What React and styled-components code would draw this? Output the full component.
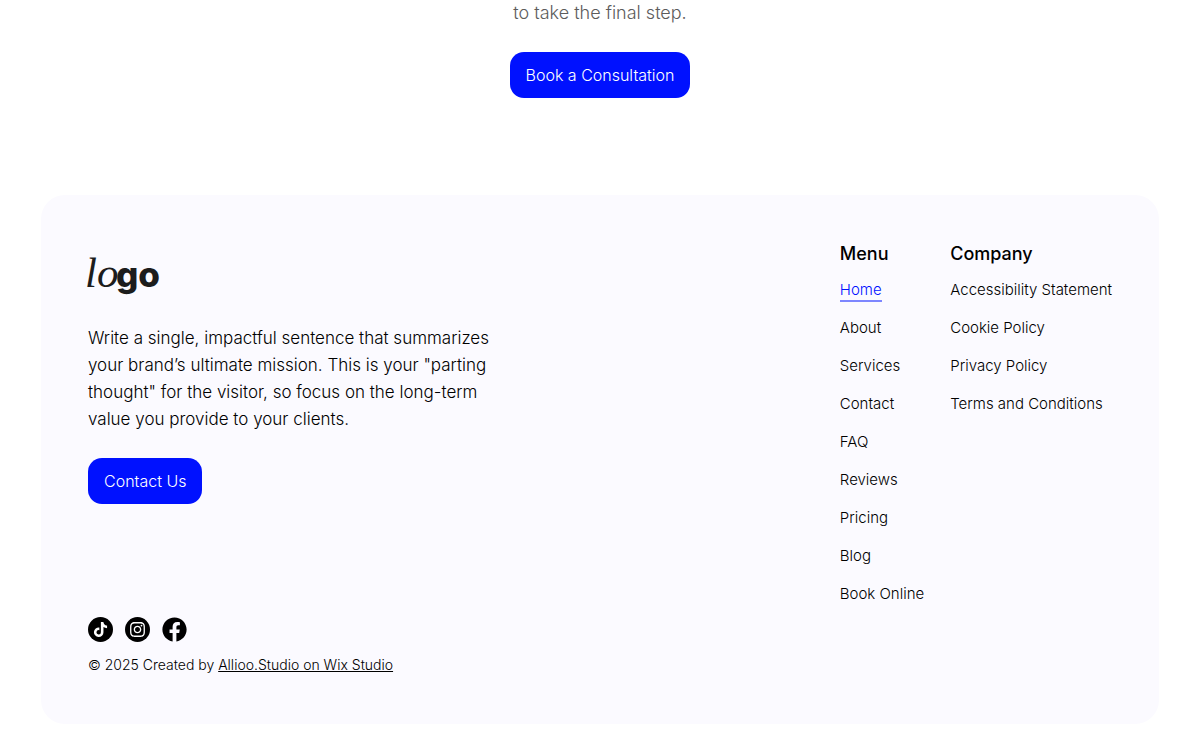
import React from "react";
import styled, { createGlobalStyle } from "styled-components";
import { FaTiktok, FaInstagram, FaFacebook } from "react-icons/fa";

const GlobalStyle = createGlobalStyle`
  * {
    box-sizing: border-box;
  }
  body {
    margin: 0;
    background: #ffffff;
    color: #000000;
    font-family: "Inter", "Liberation Sans", sans-serif;
    font-weight: 300;
  }
  a {
    color: inherit;
  }
`;

const Cta = styled.section`
  display: flex;
  flex-direction: column;
  align-items: center;
  gap: 26px;
  padding-bottom: 97px;
`;
const CtaText = styled.p`
  margin: 0;
  font-size: 18px;
  line-height: 26px;
  color: #5c5c5c;
`;
const Button = styled.button`
  height: 46px;
  padding: 0 16px;
  border: 0;
  border-radius: 14px;
  background: #0011ff;
  color: #ffffff;
  font-family: inherit;
  font-size: 16px;
  font-weight: inherit;
  cursor: pointer;
`;
const FooterBox = styled.footer`
  display: flex;
  justify-content: space-between;
  margin: 0 41px 24px;
  padding: 46px 47px 49px;
  border-radius: 24px;
  background: #fbfaff;
`;
const Brand = styled.div`
  display: flex;
  flex-direction: column;
  align-items: flex-start;
  max-width: 420px;
`;
const Logo = styled.a`
  display: block;
  padding-top: 8px;
  color: #1c1c1c;
`;
const LogoArt = styled.svg`
  display: block;
  overflow: visible;
`;
const LogoSerif = styled.text`
  font-family: "Liberation Serif", serif;
  font-size: 43px;
  font-style: italic;
`;
const LogoSans = styled.text`
  font-family: "Inter", sans-serif;
  font-size: 35px;
  font-weight: 800;
`;
const Mission = styled.p`
  margin: 28px 0 25px;
  font-size: 17px;
  line-height: 27px;
`;
const Bottom = styled.div`
  margin-top: 113px;
`;
const Socials = styled.div`
  display: flex;
  gap: 12px;
  margin-bottom: 13px;
`;
const SocialLink = styled.a`
  display: flex;
  align-items: center;
  justify-content: center;
  width: 25px;
  height: 25px;
  border-radius: 50%;
  background: ${(props) => (props.$plain ? "transparent" : "#000000")};
  color: ${(props) => (props.$plain ? "#000000" : "#ffffff")};
`;
const Copyright = styled.p`
  margin: 0;
  font-size: 14px;
  line-height: 20px;
`;
const Navs = styled.div`
  display: flex;
  gap: 26px;
`;
const NavTitle = styled.h2`
  margin: 0 0 13px;
  font-size: 18px;
  font-weight: 500;
  line-height: 26px;
`;
const NavList = styled.ul`
  display: flex;
  flex-direction: column;
  align-items: flex-start;
  gap: 16px;
  margin: 0;
  padding: 0;
  list-style: none;
`;
const NavLink = styled.a`
  display: block;
  font-size: 15px;
  line-height: 20px;
  text-decoration: none;
  color: ${(props) => (props.$active ? "#0011ff" : "#000000")};
  border-bottom: 2px solid
    ${(props) => (props.$active ? "#7d86ff" : "transparent")};
`;

const menuLinks = [
  "Home",
  "About",
  "Services",
  "Contact",
  "FAQ",
  "Reviews",
  "Pricing",
  "Blog",
  "Book Online",
];
const companyLinks = [
  "Accessibility Statement",
  "Cookie Policy",
  "Privacy Policy",
  "Terms and Conditions",
];

function FooterNav({ title, links, active }) {
  return (
    <nav aria-label={title}>
      <NavTitle>{title}</NavTitle>
      <NavList>
        {links.map((link) => (
          <li key={link}>
            <NavLink href="#" $active={link === active}>
              {link}
            </NavLink>
          </li>
        ))}
      </NavList>
    </nav>
  );
}

function App() {
  return (
    <>
      <GlobalStyle />
      <Cta>
        <CtaText>to take the final step.</CtaText>
        <Button>Book a Consultation</Button>
      </Cta>
      <FooterBox>
        <Brand>
          <Logo href="#">
            <LogoArt width="71" height="48" fill="currentColor">
              <LogoSerif x="-3" y="38">
                lo
              </LogoSerif>
              <LogoSans x="28" y="38">
                go
              </LogoSans>
            </LogoArt>
          </Logo>
          <Mission>
            Write a single, impactful sentence that summarizes your brand’s
            ultimate mission. This is your "parting thought" for the visitor,
            so focus on the long-term value you provide to your clients.
          </Mission>
          <Button>Contact Us</Button>
          <Bottom>
            <Socials>
              <SocialLink href="#" aria-label="TikTok">
                <FaTiktok size={15} />
              </SocialLink>
              <SocialLink href="#" aria-label="Instagram">
                <FaInstagram size={17} />
              </SocialLink>
              <SocialLink href="#" aria-label="Facebook" $plain>
                <FaFacebook size={25} />
              </SocialLink>
            </Socials>
            <Copyright>
              © 2025 Created by <a href="#">Allioo.Studio on Wix Studio</a>
            </Copyright>
          </Bottom>
        </Brand>
        <Navs>
          <FooterNav title="Menu" links={menuLinks} active="Home" />
          <FooterNav title="Company" links={companyLinks} />
        </Navs>
      </FooterBox>
    </>
  );
}

export default App;
